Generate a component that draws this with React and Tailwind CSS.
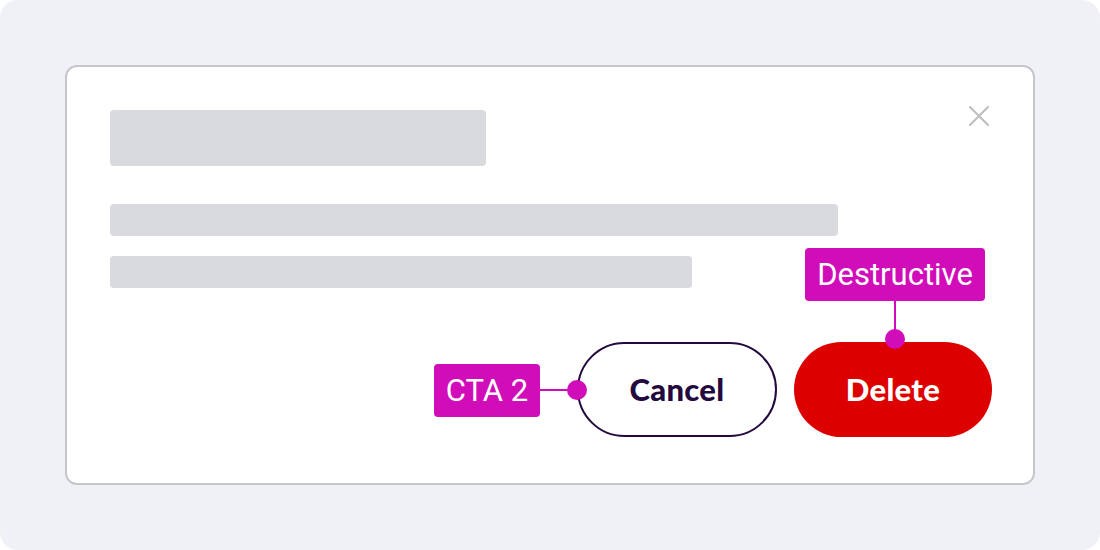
import React from "react";

const MAGENTA = "bg-[#d10cb9]";

function Bar({ className }) {
  return <div className={"rounded-[4px] bg-[#d9dadd] " + className} />;
}

function CloseIcon() {
  return (
    <svg width="22" height="22" viewBox="0 0 22 22" fill="none" stroke="#bdbdc2" strokeWidth="2" strokeLinecap="round">
      <path d="M2 2 L20 20 M20 2 L2 20" />
    </svg>
  );
}

// annotation label that sits over the buttons
function Tag({ children, className }) {
  return (
    <div
      className={
        MAGENTA +
        " absolute flex items-center justify-center rounded-[4px] text-white text-[31px] leading-none " +
        className
      }
      style={{ fontFamily: "Roboto, 'Liberation Sans', sans-serif" }}
    >
      {children}
    </div>
  );
}

export default function App() {
  return (
    <div className="w-[1100px] h-[550px] bg-white">
      <div className="w-full h-full rounded-[18px] bg-[#f0f1f6] p-[65px]">
        <div className="h-[420px] rounded-[12px] border-2 border-[#c6c7cb] bg-white pl-[43px] pr-[41px] pt-[43px]">
          <div className="flex items-start justify-between pr-[2px]">
            <Bar className="w-[376px] h-[56px]" />
            <div className="-mt-[5px]">
              <CloseIcon />
            </div>
          </div>
          <Bar className="w-[728px] h-[32px] mt-[38px]" />
          <Bar className="w-[582px] h-[32px] mt-[20px]" />

          <div
            className="mt-[54px] flex justify-end gap-[17px]"
            style={{ fontFamily: "Lato, 'Noto Sans', sans-serif" }}
          >
            <div className="relative">
              <button className="w-[200px] h-[95px] rounded-full border-2 border-[#23093d] bg-white text-[#23093d] text-[31px] font-black tracking-[0.3px]">
                Cancel
              </button>
              <Tag className="left-[-143px] top-[22px] w-[106px] h-[53px]">CTA 2</Tag>
              <div className={MAGENTA + " absolute left-[-37px] top-[47px] w-[30px] h-[2px]"} />
              <div className={MAGENTA + " absolute left-[-10px] top-[38px] w-[20px] h-[20px] rounded-full"} />
            </div>
            <div className="relative">
              <button className="w-[198px] h-[95px] rounded-full bg-[#dc0000] text-white text-[31px] font-black tracking-[0.3px]">
                Delete
              </button>
              <Tag className="left-[11px] top-[-94px] w-[180px] h-[53px]">Destructive</Tag>
              <div className={MAGENTA + " absolute left-[100px] top-[-41px] w-[2px] h-[36px]"} />
              <div className={MAGENTA + " absolute left-[91px] top-[-13px] w-[20px] h-[20px] rounded-full"} />
            </div>
          </div>
        </div>
      </div>
    </div>
  );
}
